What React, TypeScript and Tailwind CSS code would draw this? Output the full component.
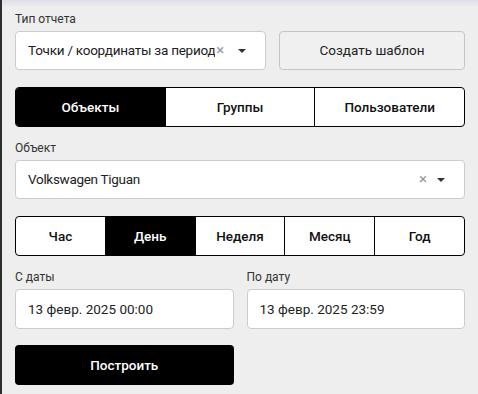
import { useState } from "react";

const Label = ({ text }: { text: string }) => (
  <div className="h-4 text-[12px] leading-4 text-[#333]">{text}</div>
);

const Caret = () => (
  <svg width="10" height="6" viewBox="0 0 10 6" className="shrink-0">
    <path d="M1 1h8L5 5z" fill="#333" />
  </svg>
);

const Select = ({ value, tight }: { value: string; tight?: boolean }) => (
  <div className="flex h-[39px] items-center rounded border border-[#cccccc] bg-white pl-3 pr-[18px]">
    <span
      className={`min-w-0 truncate text-[13.5px] text-[#222] ${
        tight ? "tracking-[-0.25px]" : "flex-1 tracking-[-0.3px]"
      }`}
    >
      {value}
    </span>
    <span
      className={`shrink-0 text-[15px] leading-none text-[#999] ${
        tight ? "ml-[1px] mr-auto pr-3" : "mr-[9px]"
      }`}
    >
      ×
    </span>
    <Caret />
  </div>
);

const Segments = ({
  items,
  active,
  onPick,
}: {
  items: string[];
  active: number;
  onPick: (i: number) => void;
}) => (
  <div className="flex h-10 overflow-hidden rounded border border-black bg-white">
    {items.map((item, i) => (
      <button
        key={item}
        onClick={() => onPick(i)}
        className={`flex-1 text-[13.5px] font-medium ${i > 0 ? "border-l border-black" : ""} ${
          i === active ? "bg-black text-white" : "text-[#111]"
        }`}
      >
        {item}
      </button>
    ))}
  </div>
);

const DateField = ({ label, value }: { label: string; value: string }) => (
  <div className="flex flex-1 flex-col">
    <Label text={label} />
    <div className="mt-1 flex h-[40px] items-center rounded border border-[#cccccc] bg-white pl-3 text-[13.5px] text-[#222]">
      {value}
    </div>
  </div>
);

export default function App() {
  const [target, setTarget] = useState(0);
  const [period, setPeriod] = useState(1);

  return (
    <div
      className="flex h-[394px] w-[478px] overflow-hidden"
      style={{ fontFamily: "Roboto, 'Noto Sans', sans-serif" }}
    >
      <div className="w-[2px] bg-[#2f2f2f]" />
      <div className="flex flex-1 flex-col bg-[linear-gradient(to_bottom,#dcdde8,#eeeeee_7px)] pl-[13px] pr-[13px] pt-[11px]">
        <Label text="Тип отчета" />
        <div className="mt-1 flex gap-[13px]">
          <div className="w-[251px]">
            <Select value="Точки / координаты за период" tight />
          </div>
          <button className="h-[39px] flex-1 rounded border border-[#c4c4c4] bg-[#f0f0f0] text-[13.5px] text-[#222]">
            Создать шаблон
          </button>
        </div>

        <div className="mt-[17px]">
          <Segments
            items={["Объекты", "Группы", "Пользователи"]}
            active={target}
            onPick={setTarget}
          />
        </div>

        <div className="mt-[13px]">
          <Label text="Объект" />
        </div>
        <div className="mt-1">
          <Select value="Volkswagen Tiguan" />
        </div>

        <div className="mt-[17px]">
          <Segments
            items={["Час", "День", "Неделя", "Месяц", "Год"]}
            active={period}
            onPick={setPeriod}
          />
        </div>

        <div className="mt-[13px] flex gap-[13px]">
          <DateField label="С даты" value="13 февр. 2025 00:00" />
          <DateField label="По дату" value="13 февр. 2025 23:59" />
        </div>

        <div className="mt-4 flex gap-[13px]">
          <button className="h-10 flex-1 rounded bg-black text-[13.5px] font-medium text-white">
            Построить
          </button>
          <div className="flex-1" />
        </div>
      </div>
    </div>
  );
}
